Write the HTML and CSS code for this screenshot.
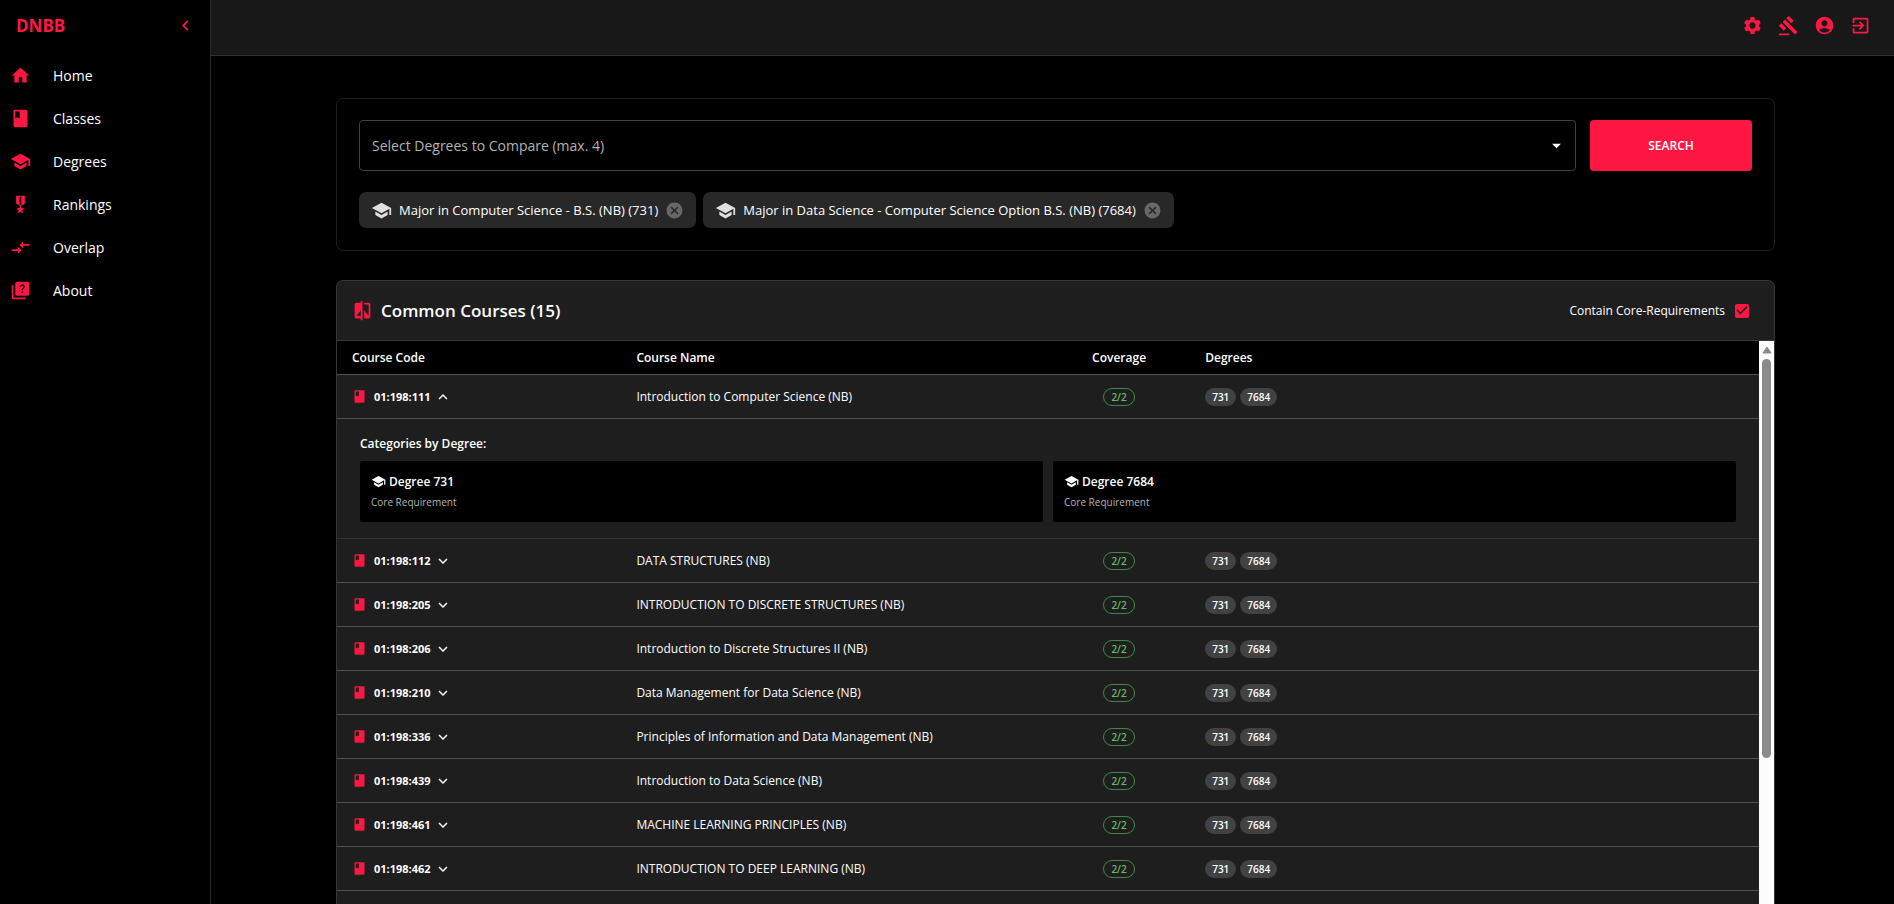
FILE: index.html
```html
<!DOCTYPE html>
<html lang="en">

<head>
    <meta charset="UTF-8">
    <meta name="viewport" content="width=device-width, initial-scale=1.0">
    <title>DNBB - Overlap</title>
    <link rel="stylesheet" href="styles.css">
</head>

<body>
    <!-- Icon set -->
    <svg class="icon-defs" aria-hidden="true">
        <symbol id="home" viewBox="0 0 24 24"><path d="M10 20v-6h4v6h5v-8h3L12 3 2 12h3v8z"/></symbol>
        <symbol id="book" viewBox="0 0 24 24"><path d="M18 2H6c-1.1 0-2 .9-2 2v16c0 1.1.9 2 2 2h12c1.1 0 2-.9 2-2V4c0-1.1-.9-2-2-2zM6 4h5v8l-2.5-1.5L6 12V4z"/></symbol>
        <symbol id="school" viewBox="0 0 24 24"><path d="M5 13.18v4L12 21l7-3.82v-4L12 17l-7-3.82zM12 3L1 9l11 6 9-4.91V17h2V9L12 3z"/></symbol>
        <symbol id="medal" viewBox="0 0 24 24"><path d="M17 10.43V2H7v8.43c0 .35.18.68.49.86l4.18 2.51-.99 2.34-3.41.29 2.59 2.24L9.07 22 12 20.23 14.93 22l-.78-3.33 2.59-2.24-3.41-.29-.99-2.34 4.18-2.51c.3-.18.48-.5.48-.86zm-4 1.8l-1 .6-1-.6V3h2v9.23z"/></symbol>
        <symbol id="arrows" viewBox="0 0 24 24"><path d="M9.01 14H2v2h7.01v3L13 15l-3.99-4v3zm5.98-1v-3H22V8h-7.01V5L11 9l3.99 4z"/></symbol>
        <symbol id="quiz" viewBox="0 0 24 24"><path d="M4 6H2v14c0 1.1.9 2 2 2h14v-2H4V6z"/><path d="M20 2H8c-1.1 0-2 .9-2 2v12c0 1.1.9 2 2 2h12c1.1 0 2-.9 2-2V4c0-1.1-.9-2-2-2zm-5.99 13c-.59 0-1.05-.47-1.05-1.05 0-.59.47-1.04 1.05-1.04.59 0 1.04.45 1.04 1.04-.01.58-.45 1.05-1.04 1.05zm2.5-6.17c-.63.93-1.23 1.21-1.56 1.81-.13.24-.18.4-.18 1.18h-1.52c0-.41-.06-1.08.26-1.65.41-.73 1.18-1.16 1.63-1.8.48-.68.21-1.94-1.14-1.94-.88 0-1.32.67-1.5 1.23l-1.37-.57C11.51 5.96 12.52 5 13.99 5c1.23 0 2.08.56 2.51 1.26.37.61.58 1.73.01 2.57z"/></symbol>
        <symbol id="settings" viewBox="0 0 24 24"><path d="M19.14 12.94c.04-.3.06-.61.06-.94 0-.32-.02-.64-.07-.94l2.03-1.58c.18-.14.23-.41.12-.61l-1.92-3.32c-.12-.22-.37-.29-.59-.22l-2.39.96c-.5-.38-1.03-.7-1.62-.94l-.36-2.54c-.04-.24-.24-.41-.48-.41h-3.84c-.24 0-.43.17-.47.41l-.36 2.54c-.59.24-1.13.57-1.62.94l-2.39-.96c-.22-.08-.47 0-.59.22L2.74 8.87c-.12.21-.08.47.12.61l2.03 1.58c-.05.3-.09.63-.09.94s.02.64.07.94l-2.03 1.58c-.18.14-.23.41-.12.61l1.92 3.32c.12.22.37.29.59.22l2.39-.96c.5.38 1.03.7 1.62.94l.36 2.54c.05.24.24.41.48.41h3.84c.24 0 .44-.17.47-.41l.36-2.54c.59-.24 1.13-.56 1.62-.94l2.39.96c.22.08.47 0 .59-.22l1.92-3.32c.12-.22.07-.47-.12-.61l-2.01-1.58zM12 15.6c-1.98 0-3.6-1.62-3.6-3.6s1.62-3.6 3.6-3.6 3.6 1.62 3.6 3.6-1.62 3.6-3.6 3.6z"/></symbol>
        <symbol id="gavel" viewBox="0 0 24 24"><path d="M1 21h12v2H1zM5.245 8.07l2.83-2.827 14.14 14.142-2.828 2.828zM12.317 1l5.657 5.656-2.83 2.83-5.654-5.66zM3.825 9.485l5.657 5.657-2.828 2.828-5.657-5.657z"/></symbol>
        <symbol id="account" viewBox="0 0 24 24"><path d="M12 2C6.48 2 2 6.48 2 12s4.48 10 10 10 10-4.48 10-10S17.52 2 12 2zm0 4c1.93 0 3.5 1.57 3.5 3.5S13.93 13 12 13s-3.5-1.57-3.5-3.5S10.07 6 12 6zm0 14c-2.03 0-4.43-.82-6.14-2.88C7.55 15.8 9.68 15 12 15s4.45.8 6.14 2.12C16.43 19.18 14.03 20 12 20z"/></symbol>
        <symbol id="logout" viewBox="0 0 24 24"><path d="M10.09 15.59L11.5 17l5-5-5-5-1.41 1.41L12.67 11H3v2h9.67l-2.58 2.59zM19 3H5c-1.11 0-2 .9-2 2v4h2V5h14v14H5v-4H3v4c0 1.1.89 2 2 2h14c1.1 0 2-.9 2-2V5c0-1.1-.9-2-2-2z"/></symbol>
        <symbol id="compare" viewBox="0 0 24 24"><path d="M10 3H5c-1.1 0-2 .9-2 2v14c0 1.1.9 2 2 2h5v2h2V1h-2v2zm0 15H5l5-6v6zm9-15h-5v2h5v13l-5-6v9h5c1.1 0 2-.9 2-2V5c0-1.1-.9-2-2-2z"/></symbol>
        <symbol id="cancel" viewBox="0 0 24 24"><path d="M12 2C6.47 2 2 6.47 2 12s4.47 10 10 10 10-4.47 10-10S17.53 2 12 2zm5 13.59L15.59 17 12 13.41 8.41 17 7 15.59 10.59 12 7 8.41 8.41 7 12 10.59 15.59 7 17 8.41 13.41 12 17 15.59z"/></symbol>
        <symbol id="left" viewBox="0 0 24 24"><path d="M15.41 7.41 14 6l-6 6 6 6 1.41-1.41L10.83 12z"/></symbol>
        <symbol id="down" viewBox="0 0 24 24"><path d="M7.41 8.59 12 13.17l4.59-4.58L18 10l-6 6-6-6z"/></symbol>
        <symbol id="up" viewBox="0 0 24 24"><path d="M7.41 15.41 12 10.83l4.59 4.58L18 14l-6-6-6 6z"/></symbol>
        <symbol id="dropdown" viewBox="0 0 24 24"><path d="M7 10l5 5 5-5z"/></symbol>
    </svg>

    <div class="app">
        <aside class="sidebar">
            <div class="sidebar-header">
                <span class="logo">DNBB</span>
                <button class="icon-button" aria-label="Collapse menu"><svg class="icon"><use href="#left"/></svg></button>
            </div>
            <nav class="menu">
                <a href="#"><svg class="icon"><use href="#home"/></svg>Home</a>
                <a href="#"><svg class="icon"><use href="#book"/></svg>Classes</a>
                <a href="#"><svg class="icon"><use href="#school"/></svg>Degrees</a>
                <a href="#"><svg class="icon"><use href="#medal"/></svg>Rankings</a>
                <a href="#"><svg class="icon"><use href="#arrows"/></svg>Overlap</a>
                <a href="#"><svg class="icon"><use href="#quiz"/></svg>About</a>
            </nav>
        </aside>

        <div class="page">
            <header class="topbar">
                <button class="icon-button" aria-label="Settings"><svg class="icon"><use href="#settings"/></svg></button>
                <button class="icon-button" aria-label="Legal"><svg class="icon"><use href="#gavel"/></svg></button>
                <button class="icon-button" aria-label="Account"><svg class="icon"><use href="#account"/></svg></button>
                <button class="icon-button" aria-label="Log out"><svg class="icon"><use href="#logout"/></svg></button>
            </header>

            <main class="content">
                <section class="search-panel">
                    <div class="search-row">
                        <div class="select-wrap">
                            <select class="degree-select" aria-label="Select Degrees to Compare">
                                <option>Select Degrees to Compare (max. 4)</option>
                            </select>
                            <svg class="icon select-arrow"><use href="#dropdown"/></svg>
                        </div>
                        <button class="search-button">SEARCH</button>
                    </div>
                    <div class="chips">
                        <div class="chip">
                            <svg class="icon"><use href="#school"/></svg>
                            <span>Major in Computer Science - B.S. (NB) (731)</span>
                            <button class="chip-remove" aria-label="Remove 731"><svg class="icon"><use href="#cancel"/></svg></button>
                        </div>
                        <div class="chip">
                            <svg class="icon"><use href="#school"/></svg>
                            <span>Major in Data Science - Computer Science Option B.S. (NB) (7684)</span>
                            <button class="chip-remove" aria-label="Remove 7684"><svg class="icon"><use href="#cancel"/></svg></button>
                        </div>
                    </div>
                </section>

                <section class="results">
                    <div class="results-header">
                        <svg class="icon"><use href="#compare"/></svg>
                        <h2>Common Courses (15)</h2>
                        <label class="core-filter" for="core">Contain Core-Requirements
                            <input type="checkbox" id="core" checked>
                        </label>
                    </div>
                    <div class="table-scroll">
                        <table class="courses">
                            <thead>
                                <tr>
                                    <th class="col-code">Course Code</th>
                                    <th class="col-name">Course Name</th>
                                    <th class="col-coverage">Coverage</th>
                                    <th class="col-degrees">Degrees</th>
                                </tr>
                            </thead>
                            <tbody>
                                <tr>
                                    <td><button class="code"><svg class="icon book"><use href="#book"/></svg>01:198:111<svg class="icon arrow"><use href="#up"/></svg></button></td>
                                    <td>Introduction to Computer Science (NB)</td>
                                    <td class="center"><span class="coverage">2/2</span></td>
                                    <td><div class="tags"><span class="tag">731</span><span class="tag">7684</span></div></td>
                                </tr>
                                <tr class="details">
                                    <td colspan="4">
                                        <h3>Categories by Degree:</h3>
                                        <div class="degree-cards">
                                            <div class="degree-card">
                                                <h4><svg class="icon"><use href="#school"/></svg>Degree 731</h4>
                                                <p>Core Requirement</p>
                                            </div>
                                            <div class="degree-card">
                                                <h4><svg class="icon"><use href="#school"/></svg>Degree 7684</h4>
                                                <p>Core Requirement</p>
                                            </div>
                                        </div>
                                    </td>
                                </tr>
                                <tr>
                                    <td><button class="code"><svg class="icon book"><use href="#book"/></svg>01:198:112<svg class="icon arrow"><use href="#down"/></svg></button></td>
                                    <td>DATA STRUCTURES (NB)</td>
                                    <td class="center"><span class="coverage">2/2</span></td>
                                    <td><div class="tags"><span class="tag">731</span><span class="tag">7684</span></div></td>
                                </tr>
                                <tr>
                                    <td><button class="code"><svg class="icon book"><use href="#book"/></svg>01:198:205<svg class="icon arrow"><use href="#down"/></svg></button></td>
                                    <td>INTRODUCTION TO DISCRETE STRUCTURES (NB)</td>
                                    <td class="center"><span class="coverage">2/2</span></td>
                                    <td><div class="tags"><span class="tag">731</span><span class="tag">7684</span></div></td>
                                </tr>
                                <tr>
                                    <td><button class="code"><svg class="icon book"><use href="#book"/></svg>01:198:206<svg class="icon arrow"><use href="#down"/></svg></button></td>
                                    <td>Introduction to Discrete Structures II (NB)</td>
                                    <td class="center"><span class="coverage">2/2</span></td>
                                    <td><div class="tags"><span class="tag">731</span><span class="tag">7684</span></div></td>
                                </tr>
                                <tr>
                                    <td><button class="code"><svg class="icon book"><use href="#book"/></svg>01:198:210<svg class="icon arrow"><use href="#down"/></svg></button></td>
                                    <td>Data Management for Data Science (NB)</td>
                                    <td class="center"><span class="coverage">2/2</span></td>
                                    <td><div class="tags"><span class="tag">731</span><span class="tag">7684</span></div></td>
                                </tr>
                                <tr>
                                    <td><button class="code"><svg class="icon book"><use href="#book"/></svg>01:198:336<svg class="icon arrow"><use href="#down"/></svg></button></td>
                                    <td>Principles of Information and Data Management (NB)</td>
                                    <td class="center"><span class="coverage">2/2</span></td>
                                    <td><div class="tags"><span class="tag">731</span><span class="tag">7684</span></div></td>
                                </tr>
                                <tr>
                                    <td><button class="code"><svg class="icon book"><use href="#book"/></svg>01:198:439<svg class="icon arrow"><use href="#down"/></svg></button></td>
                                    <td>Introduction to Data Science (NB)</td>
                                    <td class="center"><span class="coverage">2/2</span></td>
                                    <td><div class="tags"><span class="tag">731</span><span class="tag">7684</span></div></td>
                                </tr>
                                <tr>
                                    <td><button class="code"><svg class="icon book"><use href="#book"/></svg>01:198:461<svg class="icon arrow"><use href="#down"/></svg></button></td>
                                    <td>MACHINE LEARNING PRINCIPLES (NB)</td>
                                    <td class="center"><span class="coverage">2/2</span></td>
                                    <td><div class="tags"><span class="tag">731</span><span class="tag">7684</span></div></td>
                                </tr>
                                <tr>
                                    <td><button class="code"><svg class="icon book"><use href="#book"/></svg>01:198:462<svg class="icon arrow"><use href="#down"/></svg></button></td>
                                    <td>INTRODUCTION TO DEEP LEARNING (NB)</td>
                                    <td class="center"><span class="coverage">2/2</span></td>
                                    <td><div class="tags"><span class="tag">731</span><span class="tag">7684</span></div></td>
                                </tr>
                            </tbody>
                        </table>
                        <div class="scrollbar" aria-hidden="true">
                            <svg class="scroll-up" viewBox="0 0 10 8"><path d="M5 1 9 7H1z"/></svg>
                            <div class="scroll-thumb"></div>
                        </div>
                    </div>
                </section>
            </main>
        </div>
    </div>
</body>

</html>
```
FILE: styles.css
```css
* {
    box-sizing: border-box;
}

body {
    margin: 0;
    background-color: #000;
    color: #fff;
    font-family: "Segoe UI", "Open Sans", sans-serif;
    font-size: 14px;
}

button {
    background: none;
    border: none;
    padding: 0;
    color: inherit;
    font-family: inherit;
    cursor: pointer;
}

h2,
h3,
h4,
p {
    margin: 0;
}

.icon-defs {
    display: none;
}

.icon {
    width: 21px;
    height: 21px;
    flex-shrink: 0;
    display: block;
    fill: currentColor;
}

.app {
    display: flex;
    height: 100vh;
    overflow: hidden;
}

/* Sidebar */
.sidebar {
    width: 211px;
    flex-shrink: 0;
    border-right: 1px solid #272727;
}

.sidebar-header {
    display: flex;
    justify-content: space-between;
    align-items: center;
    height: 51px;
    padding: 0 14px 0 16px;
    color: #ff1744;
}

.logo {
    font-size: 17px;
    font-weight: bold;
}

.menu {
    padding-top: 3px;
}

.menu a {
    display: flex;
    align-items: center;
    gap: 22px;
    height: 43px;
    padding: 0 10px;
    color: #fff;
    text-decoration: none;
}

.menu .icon {
    color: #ff1744;
}

/* Top bar */
.page {
    flex: 1;
    min-width: 0;
}

.topbar {
    display: flex;
    justify-content: flex-end;
    align-items: center;
    gap: 15px;
    height: 56px;
    padding: 0 23px 4px;
    background-color: #181818;
    border-bottom: 1px solid #333;
    color: #ff1744;
}

/* Main content */
.content {
    display: flex;
    flex-direction: column;
    gap: 29px;
    max-width: 1493px;
    margin: 0 auto;
    padding: 42px 24px 0 30px;
}

.search-panel {
    padding: 21px 22px 22px;
    border: 1px solid #1e1e1e;
    border-radius: 7px;
}

.search-row {
    display: flex;
    gap: 14px;
}

.select-wrap {
    position: relative;
    flex: 1;
}

.degree-select {
    width: 100%;
    height: 51px;
    padding: 0 12px;
    appearance: none;
    background-color: #000;
    border: 1px solid #424242;
    border-radius: 4px;
    color: #b3b3b3;
    font-family: inherit;
    font-size: 14px;
}

.select-arrow {
    position: absolute;
    top: 15px;
    right: 9px;
    pointer-events: none;
}

.search-button {
    width: 162px;
    background-color: #ff1744;
    border-radius: 4px;
    font-size: 12px;
    font-weight: 600;
}

.chips {
    display: flex;
    flex-wrap: wrap;
    gap: 7px;
    margin-top: 21px;
}

.chip {
    display: flex;
    align-items: center;
    gap: 7px;
    height: 36px;
    padding: 0 12px;
    background-color: #282828;
    border-radius: 7px;
    font-size: 13px;
}

.chip > .icon {
    color: #e0e0e0;
}

.chip-remove {
    color: #686868;
}

.chip-remove .icon {
    width: 19px;
    height: 19px;
}

/* Results */
.results {
    border: 1px solid #383838;
    border-radius: 7px;
    background-color: #1e1e1e;
    overflow: hidden;
}

.results-header {
    display: flex;
    align-items: center;
    gap: 8px;
    height: 60px;
    padding: 0 25px 0 15px;
    border-bottom: 1px solid #383838;
}

.results-header > .icon {
    color: #ff1744;
}

.results-header h2 {
    font-size: 17px;
    font-weight: 600;
}

.core-filter {
    display: flex;
    align-items: center;
    gap: 10px;
    margin-left: auto;
    font-size: 12px;
}

.core-filter input {
    position: relative;
    appearance: none;
    width: 14px;
    height: 14px;
    margin: 0;
    background-color: #ff1744;
    border-radius: 2px;
}

.core-filter input:checked::after {
    content: "";
    position: absolute;
    inset: 0;
    background-color: #1e1e1e;
    clip-path: polygon(39% 78%, 11% 50%, 19% 42%, 39% 62%, 81% 20%, 89% 28%);
}

.table-scroll {
    display: flex;
    align-items: flex-start;
    height: 600px;
    overflow: hidden;
}

.courses {
    flex: 1;
    table-layout: fixed;
    border-collapse: separate;
    border-spacing: 0;
    font-size: 12px;
}

.courses th,
.courses td {
    padding: 0 15px;
    border-bottom: 1px solid #515151;
    text-align: left;
}

.courses th {
    height: 34px;
    background-color: #000;
    font-weight: 600;
}

.courses td {
    height: 44px;
}

.col-code {
    width: 20%;
}

.col-name {
    width: 30%;
}

.courses .col-coverage {
    width: 10%;
    text-align: center;
}

.col-degrees {
    width: 40%;
}

.courses .center {
    text-align: center;
}

.code {
    display: flex;
    align-items: center;
    font-size: 11px;
    font-weight: bold;
}

.code .book {
    width: 15px;
    height: 15px;
    margin-right: 7px;
    color: #ff1744;
}

.code .arrow {
    width: 18px;
    height: 18px;
    margin-left: 3px;
}

.coverage,
.tag {
    display: inline-block;
    height: 18px;
    border-radius: 9px;
    font-size: 10px;
    font-weight: 600;
    line-height: 18px;
}

.coverage {
    padding: 0 7px;
    border: 1px solid #43864a;
    color: #66bb6a;
    line-height: 16px;
}

.tags {
    display: flex;
    gap: 4px;
}

.tag {
    padding: 0 7px;
    background-color: #424242;
}

.courses .details td {
    padding: 14px 23px 16px;
    border-bottom-color: #333;
}

.details h3 {
    margin-bottom: 7px;
    font-size: 12px;
    font-weight: 600;
    line-height: 21px;
}

.degree-cards {
    display: grid;
    grid-template-columns: 1fr 1fr;
    gap: 10px;
}

.degree-card {
    padding: 10px 11px;
    background-color: #000;
    border-radius: 2px;
}

.degree-card h4 {
    display: flex;
    align-items: center;
    gap: 3px;
    font-size: 12px;
    font-weight: 600;
    line-height: 21px;
}

.degree-card .icon {
    width: 15px;
    height: 15px;
}

.degree-card p {
    color: #b3b3b3;
    font-size: 10px;
    line-height: 20px;
}

/* Scrollbar beside the table */
.scrollbar {
    display: flex;
    flex-direction: column;
    align-items: center;
    gap: 5px;
    width: 15px;
    height: 100%;
    padding-top: 5px;
    background-color: #fcfcfc;
}

.scroll-up {
    width: 10px;
    height: 8px;
    fill: #8b8b8b;
    stroke: #8b8b8b;
    stroke-linejoin: round;
}

.scroll-thumb {
    width: 9px;
    height: 67%;
    background-color: #8b8b8b;
    border-radius: 5px;
}
```
